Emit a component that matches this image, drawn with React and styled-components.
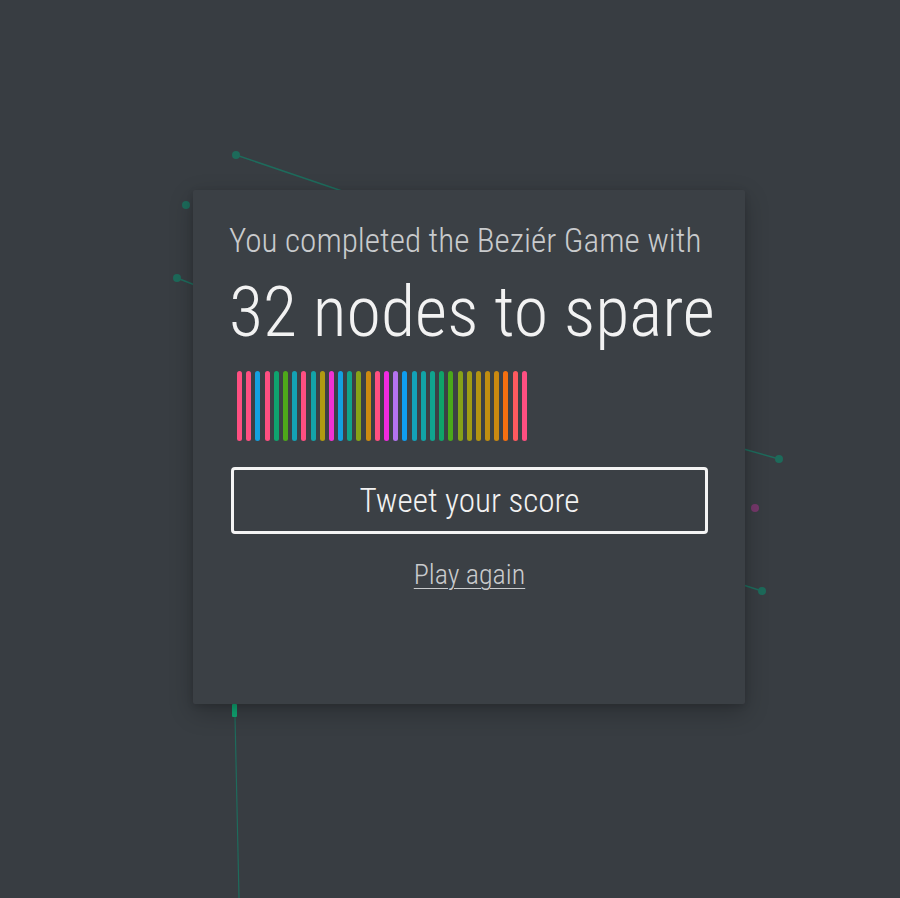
import React from 'react'
import styled, { createGlobalStyle } from 'styled-components'

const GlobalStyle = createGlobalStyle`
  html, body {
    margin: 0;
    padding: 0;
    background: #383d42;
    font-family: Roboto, "Liberation Sans", sans-serif;
    overflow: hidden;
  }
`

const Page = styled.div`
  position: relative;
  width: 900px;
  height: 898px;
  display: flex;
  align-items: flex-start;
  padding: 190px 0 0 193px;
  box-sizing: border-box;
`

const Canvas = styled.svg`
  position: absolute;
  left: 0;
  top: 0;
  width: 900px;
  height: 898px;
`

const Card = styled.div`
  position: relative;
  width: 552px;
  height: 514px;
  box-sizing: border-box;
  padding: 30px 37px 0 38px;
  background: #3b4045;
  border-radius: 2px;
  box-shadow: 0 8px 24px rgba(0, 0, 0, 0.24), 0 2px 6px rgba(0, 0, 0, 0.12);
  display: flex;
  flex-direction: column;
  font-stretch: 75%;
`

const Lead = styled.div`
  font-size: 33.2px;
  font-weight: 300;
  color: #c9cbcd;
  line-height: 42px;
  margin-left: -2px;
  white-space: nowrap;
`

const Score = styled.div`
  font-size: 70px;
  font-weight: 300;
  color: #f2f2f2;
  line-height: 80px;
  margin: 10px 0 0 -2px;
  white-space: nowrap;
`

const Bars = styled.div`
  display: flex;
  gap: 4.2px;
  height: 70px;
  margin: 19px 0 0 6px;
`

const Bar = styled.span`
  width: 5px;
  height: 100%;
  border-radius: 3px;
  background: ${({ $color }) => $color};
`

const TweetButton = styled.button`
  margin-top: 26px;
  height: 67px;
  width: 100%;
  box-sizing: border-box;
  border: 3px solid #f4f4f4;
  border-radius: 4px;
  background: transparent;
  color: #f2f2f2;
  font-family: inherit;
  font-stretch: inherit;
  font-size: 33.2px;
  font-weight: 300;
  cursor: pointer;
`

const PlayAgain = styled.a`
  align-self: center;
  margin-top: 24px;
  font-size: 28px;
  font-weight: 300;
  color: #c9cbcd;
  text-decoration: underline;
  text-underline-offset: 4px;
  text-decoration-thickness: 1px;
  cursor: pointer;
`

const colors = [
  '#ff4f81', '#ff4f81', '#14a0e0', '#ff4f81', '#0fa36e', '#4ea81a', '#14a2b4', '#ff4f81',
  '#13a3a8', '#b09a12', '#f032d2', '#14a0e0', '#10a38a', '#86a318', '#cc8a10', '#ff4f81',
  '#f02ae0', '#b373f0', '#0f9ef0', '#13a2b8', '#12a3a6', '#10a48f', '#0fa36a', '#4aa81a',
  '#86a118', '#a09c14', '#b39412', '#c08e10', '#c98810', '#f56f10', '#ff5a5f', '#ff4f81',
]

const Background = () => (
  <Canvas viewBox="0 0 900 898">
    <g stroke="#1e6b5c" strokeWidth="1.5" fill="none">
      <line x1="236" y1="155" x2="345" y2="192" />
      <line x1="177" y1="278" x2="200" y2="287" />
      <line x1="779" y1="459" x2="740" y2="448" />
      <line x1="762" y1="591" x2="740" y2="584" />
      <line x1="235" y1="716" x2="239" y2="898" strokeWidth="1.2" />
    </g>
    <g fill="#1d6a5a">
      <circle cx="236" cy="155" r="4" />
      <circle cx="186" cy="205" r="4" />
      <circle cx="177" cy="278" r="4" />
      <circle cx="779" cy="459" r="4" />
      <circle cx="762" cy="591" r="4" />
    </g>
    <circle cx="755" cy="508" r="4" fill="#75386a" />
    <rect x="232" y="704" width="5" height="13" rx="1" fill="#10a572" />
  </Canvas>
)

const App = () => {
  return (
    <Page>
      <GlobalStyle />
      <Background />
      <Card>
        <Lead>You completed the Beziér Game with</Lead>
        <Score>32 nodes to spare</Score>
        <Bars>
          {colors.map((c, i) => (
            <Bar key={i} $color={c} />
          ))}
        </Bars>
        <TweetButton>Tweet your score</TweetButton>
        <PlayAgain>Play again</PlayAgain>
      </Card>
    </Page>
  )
}

export default App
